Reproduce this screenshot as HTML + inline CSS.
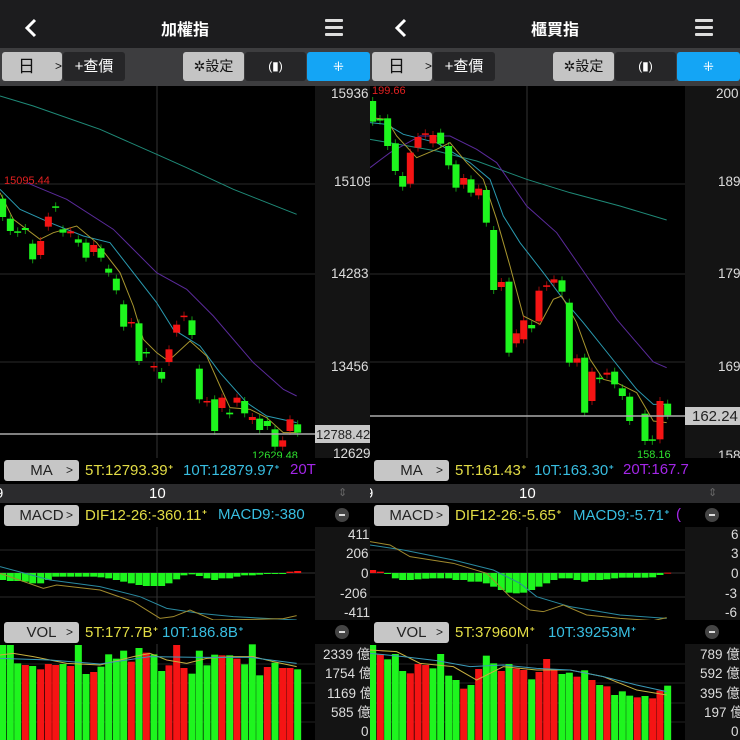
<!DOCTYPE html>
<html><head><meta charset="utf-8">
<style>
*{margin:0;padding:0;box-sizing:border-box}
body{width:740px;height:740px;background:#000;overflow:hidden;font-family:"Liberation Sans","Noto Sans CJK TC",sans-serif;position:relative}
.p{position:absolute;top:0;width:370px;height:740px;overflow:hidden;background:#000}
.hdr{position:absolute;left:0;top:0;width:370px;height:48px;background:#1c1c1e;color:#fff}
.hdr .t{position:absolute;left:0;width:370px;top:16px;text-align:center;font-size:16px;font-weight:bold}
.tb{position:absolute;left:0;top:48px;width:370px;height:38px;background:#3d3d3f}
.b{position:absolute;top:4px;height:29px;border-radius:3px;font-size:15px;line-height:29px;text-align:center}
.lg{background:#c4c4c4;color:#111}
.dk{background:#262628;color:#fff}
.bl{background:#14a5f5;color:#fff}
.row{position:absolute;left:0;width:370px;height:24px;background:#000}
.btn{position:absolute;left:4px;top:2px;width:75px;height:21px;background:#c6c6c6;border-radius:3px;color:#222;font-size:15px;line-height:21px;text-align:center}
.btn i{position:absolute;right:6px;font-style:normal;font-size:12px}
.tx{position:absolute;top:3px;font-size:15px;white-space:nowrap}
.y{color:#e2dc45}.c{color:#38bde0}.pu{color:#a326e8}
.mn{position:absolute;left:335px;top:5px;width:14px;height:14px;border-radius:7px;background:#444}
.mn:after{content:"";position:absolute;left:4px;top:6px;width:6px;height:2px;background:#ddd}
.ax{position:absolute;left:0;top:484px;width:370px;height:20px;background:#2b2b2d;color:#fff;font-size:15px}
</style></head><body>

<div class="p" id="L" style="left:0">
<svg id="sL" width="370" height="740" style="position:absolute;left:0;top:0"></svg>
<div class="hdr"><svg width="20" height="20" style="position:absolute;left:22px;top:18px"><path d="M13 2 L5 10 L13 18" stroke="#fff" stroke-width="3" fill="none"/></svg><div class="t">加權指</div>
<svg width="20" height="18" style="position:absolute;left:325px;top:19px"><rect y="0" width="18" height="3" rx="1" fill="#ddd"/><rect y="7" width="18" height="3" rx="1" fill="#ddd"/><rect y="14" width="18" height="3" rx="1" fill="#ddd"/></svg></div>
<div class="tb">
<div class="b lg" style="left:2px;width:60px;text-align:left;padding-left:16px;font-size:17px">日<span style="position:absolute;left:53px;font-size:12px">&gt;</span></div>
<div class="b dk" style="left:63px;width:62px">+查價</div>
<div class="b lg" style="left:183px;width:61px;font-size:14px">✲設定</div>
<div class="b dk" style="left:245px;width:61px;font-size:12px">(▮)</div>
<div class="b bl" style="left:307px;width:63px;font-size:13px">⁜</div>
</div>
<div class="row" style="top:458px"><div class="btn">MA<i>&gt;</i></div><span class="tx y" style="left:85px">5T:12793.39ᐩ</span><span class="tx c" style="left:183px">10T:12879.97ᐩ</span><span class="tx pu" style="left:290px">20T</span></div>
<div class="ax"><span style="position:absolute;left:-5px;top:1px">9</span><span style="position:absolute;left:149px;top:1px">10</span><span style="position:absolute;left:338px;top:2px;color:#666;font-size:11px">⇕</span></div>
<div class="row" style="top:503px"><div class="btn">MACD<i>&gt;</i></div><span class="tx y" style="left:85px">DIF12-26:-360.11ᐩ</span><span class="tx c" style="left:218px">MACD9:-380</span><div class="mn"></div></div>
<div class="row" style="top:620px"><div class="btn">VOL<i>&gt;</i></div><span class="tx y" style="left:85px">5T:177.7Bᐩ</span><span class="tx c" style="left:162px">10T:186.8Bᐩ</span><div class="mn"></div></div>
</div>

<div class="p" id="R" style="left:370px">
<svg id="sR" width="370" height="740" style="position:absolute;left:0;top:0"></svg>
<div class="hdr"><svg width="20" height="20" style="position:absolute;left:22px;top:18px"><path d="M13 2 L5 10 L13 18" stroke="#fff" stroke-width="3" fill="none"/></svg><div class="t">櫃買指</div>
<svg width="20" height="18" style="position:absolute;left:325px;top:19px"><rect y="0" width="18" height="3" rx="1" fill="#ddd"/><rect y="7" width="18" height="3" rx="1" fill="#ddd"/><rect y="14" width="18" height="3" rx="1" fill="#ddd"/></svg></div>
<div class="tb">
<div class="b lg" style="left:2px;width:60px;text-align:left;padding-left:16px;font-size:17px">日<span style="position:absolute;left:53px;font-size:12px">&gt;</span></div>
<div class="b dk" style="left:63px;width:62px">+查價</div>
<div class="b lg" style="left:183px;width:61px;font-size:14px">✲設定</div>
<div class="b dk" style="left:245px;width:61px;font-size:12px">(▮)</div>
<div class="b bl" style="left:307px;width:63px;font-size:13px">⁜</div>
</div>
<div class="row" style="top:458px"><div class="btn">MA<i>&gt;</i></div><span class="tx y" style="left:85px">5T:161.43ᐩ</span><span class="tx c" style="left:164px">10T:163.30ᐩ</span><span class="tx pu" style="left:253px">20T:167.7</span></div>
<div class="ax"><span style="position:absolute;left:-5px;top:1px">9</span><span style="position:absolute;left:149px;top:1px">10</span><span style="position:absolute;left:338px;top:2px;color:#666;font-size:11px">⇕</span></div>
<div class="row" style="top:503px"><div class="btn">MACD<i>&gt;</i></div><span class="tx y" style="left:85px">DIF12-26:-5.65ᐩ</span><span class="tx c" style="left:203px">MACD9:-5.71ᐩ</span><span class="tx pu" style="left:306px">(</span><div class="mn"></div></div>
<div class="row" style="top:620px"><div class="btn">VOL<i>&gt;</i></div><span class="tx y" style="left:85px">5T:37960Mᐩ</span><span class="tx c" style="left:178px">10T:39253Mᐩ</span><div class="mn"></div></div>
</div>

<script>
var G="#1ef51e",Rd="#f51414";
function pl(pts,ox,oy,col){var s="";for(var i=0;i<pts.length;i+=2)s+=(pts[i]/3)+","+(oy+pts[i+1]/3)+" ";return '<polyline points="'+s+'" fill="none" stroke="'+col+'" stroke-width="1"/>';}
function build(id,cfg){
var h='';
h+='<rect x="0" y="86" width="315" height="372" fill="#000"/>';
h+='<rect x="315" y="86" width="55" height="372" fill="#141414"/>';
h+='<rect x="315" y="527" width="55" height="93" fill="#141414"/>';
h+='<rect x="315" y="644" width="55" height="96" fill="#141414"/>';
[184,274,362].forEach(function(y){h+='<line x1="0" x2="315" y1="'+y+'" y2="'+y+'" stroke="#2a2a2a"/>';});
[550,597].forEach(function(y){h+='<line x1="0" x2="315" y1="'+y+'" y2="'+y+'" stroke="#2a2a2a"/>';});
[664,683,703,722].forEach(function(y){h+='<line x1="0" x2="315" y1="'+y+'" y2="'+y+'" stroke="#222"/>';});
h+='<line x1="157" x2="157" y1="86" y2="458" stroke="#333"/><line x1="157" x2="157" y1="527" y2="740" stroke="#333"/>';
h+='<line x1="0" x2="315" y1="573" y2="573" stroke="#333"/>';
cfg.ma.forEach(function(m){h+=pl(m[1],0,86,m[0]);});
cfg.c.forEach(function(d){var x=d[0]/3-3.5,t=86+d[1]/3,b=86+d[2]/3,col=d[3]?Rd:G;if(b-t<1.5)b=t+1.5;
h+='<line x1="'+(x+3.5)+'" x2="'+(x+3.5)+'" y1="'+(t-4)+'" y2="'+(b+4)+'" stroke="'+col+'" stroke-opacity=".6"/>';
h+='<rect x="'+x+'" y="'+t+'" width="7" height="'+(b-t)+'" fill="'+col+'"/>';});
h+='<line x1="0" x2="315" y1="'+cfg.pl+'" y2="'+cfg.pl+'" stroke="#aaa" stroke-width="1.5"/>';
h+='<rect x="315" y="'+(cfg.pl-9)+'" width="60" height="18" fill="#c8c8c8"/>';
h+='<text x="'+cfg.plx+'" y="'+(cfg.pl+5)+'" font-size="'+cfg.plf+'" fill="#222">'+cfg.plt+'</text>';
h+=cfg.extra;
cfg.lab.forEach(function(l){h+='<text x="'+l[0]+'" y="'+l[1]+'" font-size="13.5" fill="#ddd">'+l[2]+'</text>';});
cfg.mh.forEach(function(d){var x=d[0]/3-3.5,v=cfg.mo+d[1]/3,z=573;var col=v<z?Rd:G;var y=Math.min(v,z),hh=Math.abs(v-z);if(hh<1)hh=1;
h+='<rect x="'+x+'" y="'+y+'" width="7" height="'+hh+'" fill="'+col+'"/>';});
cfg.ml.forEach(function(m){h+=pl(m[1],0,cfg.mo,m[0]);});
cfg.v.forEach(function(d){var x=d[0]/3-3.5,t=cfg.vo+d[1]/3;h+='<rect x="'+x+'" y="'+t+'" width="7" height="'+(740-t)+'" fill="'+(d[2]?Rd:G)+'"/>';});
cfg.vl.forEach(function(m){h+=pl(m[1],0,cfg.vo,m[0]);});
document.getElementById(id).innerHTML=h;}
function C(s){return s.split(";").map(function(q){var a=q.split(",");return [+a[0],+a[1],+a[2],a[3]=="r"];});}
function V(s){return s.split(";").map(function(q){var a=q.split(",");return [+a[0],+a[1],a[2]=="r"];});}
function H(s){return s.split(";").map(function(q){var a=q.split(",");return [+a[0],+a[1]];});}
build("sL",{
c:C("8,338,393,g;31,398,435,g;53,436,440,g;76,426,432,g;98,473,520,g;122,465,507,r;145,392,422,r;167,361,363,g;189,430,440,g;212,436,442,r;235,460,470,g;258,470,515,g;281,477,498,r;303,487,515,g;326,548,560,g;349,578,613,g;371,655,722,g;394,708,710,r;417,712,825,g;439,798,802,g;462,840,843,r;485,858,878,g;507,790,828,r;530,716,740,r;552,689,693,r;576,703,747,g;598,848,940,g;621,945,948,r;644,940,1035,g;666,935,966,r;689,980,985,g;711,935,950,r;734,945,982,g;757,993,1002,r;779,998,1032,g;802,1005,1020,g;825,1030,1082,g;848,1063,1082,r;870,1000,1035,r;893,1015,1040,g"),
ma:[["#1f8a78",[0,30,100,60,300,130,470,205,560,245,700,310,890,385]],["#5a2a9a",[80,290,200,340,340,430,470,560,560,610,640,690,760,830,850,910,890,930]],["#2a9ab0",[0,310,60,370,150,410,250,450,330,470,400,560,470,650,520,730,600,780,660,860,740,950,800,990,890,1010]],["#a8962e",[0,320,40,400,120,460,160,440,230,420,290,470,360,560,400,660,430,760,470,800,505,825,570,765,620,810,660,900,690,965,750,970,800,995,850,1040,890,1040]]],
pl:434,plx:316,plf:13,plt:"12788.42",
extra:'<text x="4" y="184" font-size="11" fill="#e02020">15095.44</text><text x="252" y="459" font-size="11" fill="#2ee02e">12629.48</text>',
lab:[[331,98,"15936"],[334,186,"15109"],[331,278,"14283"],[331,371,"13456"],[333,458,"12629"],[348,539,"411"],[346,558,"206"],[361,578,"0"],[340,598,"-206"],[344,617,"-411"],[323,659,"2339 億"],[325,678,"1754 億"],[327,698,"1169 億"],[331,717,"585 億"],[361,736,"0"]],
mo:520,
mh:H("8,180;31,183;53,183;76,185;98,190;122,190;145,180;167,170;189,170;212,170;235,170;258,170;281,170;303,172;326,175;349,180;371,185;394,190;417,195;439,198;462,198;485,198;507,190;530,178;552,166;576,163;598,168;621,175;644,180;666,175;689,175;711,170;734,166;757,166;779,164;802,162;825,162;848,162;870,155;893,153"),
ml:[["#2a8aa0",[0,140,150,180,300,200,420,230,500,265,600,280,700,290,890,300]],["#a08a2e",[0,160,130,205,170,195,300,210,400,245,480,295,520,290,570,270,640,300,760,298,850,296,890,287]]],
vo:520,
v:V("8,375,g;31,375,g;53,430,g;76,435,r;98,438,g;122,448,r;145,432,r;167,435,r;189,432,g;212,438,r;235,375,g;258,462,g;281,456,r;303,440,g;326,403,g;349,416,g;371,392,g;394,425,r;417,384,g;439,398,r;462,403,g;485,453,g;507,436,r;530,375,r;552,444,r;576,461,g;598,392,g;621,436,g;644,404,g;666,406,r;689,406,g;711,416,r;734,433,g;757,373,g;779,466,g;802,441,r;825,428,g;848,444,r;870,444,r;893,448,g"),
vl:[["#c8b040",[0,405,40,400,100,410,200,430,300,435,400,410,450,400,500,420,560,430,620,415,700,410,760,410,820,425,890,440]],["#3a9ab8",[0,415,150,420,300,432,450,410,600,412,750,412,890,430]]]
});
build("sR",{
c:C("8,45,107,g;30,99,101,g;53,97,180,g;76,172,255,g;98,270,302,g;121,200,293,r;144,153,185,r;166,142,146,r;189,147,172,r;212,140,173,g;236,180,238,g;258,235,305,g;281,276,296,r;303,280,320,g;326,308,328,r;349,312,410,g;371,432,612,g;394,588,603,r;417,587,800,g;439,742,772,r;461,703,760,r;485,717,727,g;507,614,706,r;530,598,600,r;552,580,590,r;576,583,617,g;598,650,830,g;621,817,830,r;644,815,980,g;666,857,945,r;689,875,878,g;711,860,866,r;734,857,895,g;757,907,930,g;779,932,1005,g;825,983,1065,g;847,1060,1063,g;870,945,1060,r;893,953,988,g"),
ma:[["#1f8a78",[0,160,200,195,320,225,470,280,600,320,750,360,890,402]],["#5a2a9a",[0,245,60,200,150,150,240,150,320,190,380,230,470,360,560,440,650,570,740,700,850,828,890,845]],["#2a9ab0",[0,110,50,115,100,145,200,170,300,230,360,280,400,390,450,470,520,560,580,640,640,710,720,810,800,910,850,955,890,955]],["#a8962e",[0,95,50,100,80,150,140,215,200,190,240,170,290,230,340,280,380,400,420,540,460,690,510,715,550,640,575,630,620,710,660,820,700,880,740,890,800,920,850,1005,890,1010]]],
pl:416,plx:322,plf:15,plt:"162.24",
extra:'<text x="2" y="94" font-size="11" fill="#e02020">199.66</text><text x="267" y="458" font-size="11" fill="#2ee02e">158.16</text>',
lab:[[346,98,"200"],[348,186,"189"],[348,278,"179"],[348,371,"169"],[348,460,"158"],[361,539,"6"],[361,558,"3"],[361,578,"0"],[355,598,"-3"],[355,617,"-6"],[330,659,"789 億"],[330,678,"592 億"],[330,698,"395 億"],[334,717,"197 億"],[361,736,"0"]],
mo:450,
mh:H("8,360;31,365;53,370;76,385;98,390;121,390;144,388;167,386;189,385;212,385;236,385;258,390;281,390;303,395;326,395;349,400;371,410;394,420;417,428;439,430;461,428;485,420;507,410;530,400;552,390;576,385;598,385;621,390;644,395;666,390;689,390;711,388;734,385;757,383;779,383;802,383;825,383;848,382;870,375;893,368"),
ml:[["#2a8aa0",[0,285,100,300,250,330,370,360,450,400,500,440,600,470,750,495,890,505]],["#a08a2e",[0,275,60,285,120,320,250,340,350,370,420,440,480,480,520,485,580,465,650,495,750,505,850,512,890,503]]],
vo:450,
v:V("8,585,g;31,612,r;53,628,g;76,612,g;98,663,g;121,670,r;144,642,r;167,645,r;189,655,g;212,612,g;236,677,g;258,690,g;281,716,r;303,705,g;326,657,r;349,617,g;371,640,g;394,663,r;417,642,g;439,656,r;461,660,r;485,688,g;507,666,r;530,627,r;552,660,r;576,672,g;598,668,g;621,680,r;644,661,g;666,690,r;689,705,g;711,709,r;734,735,g;757,724,g;779,737,g;802,742,r;825,738,g;848,745,r;870,722,r;893,707,g"),
vl:[["#c8b040",[0,600,80,605,150,640,250,650,320,690,400,650,500,660,600,660,700,680,800,720,890,735]],["#3a9ab8",[0,610,100,620,200,632,300,650,400,645,500,655,600,660,700,680,800,705,890,725]]]
});
</script>
</body></html>
